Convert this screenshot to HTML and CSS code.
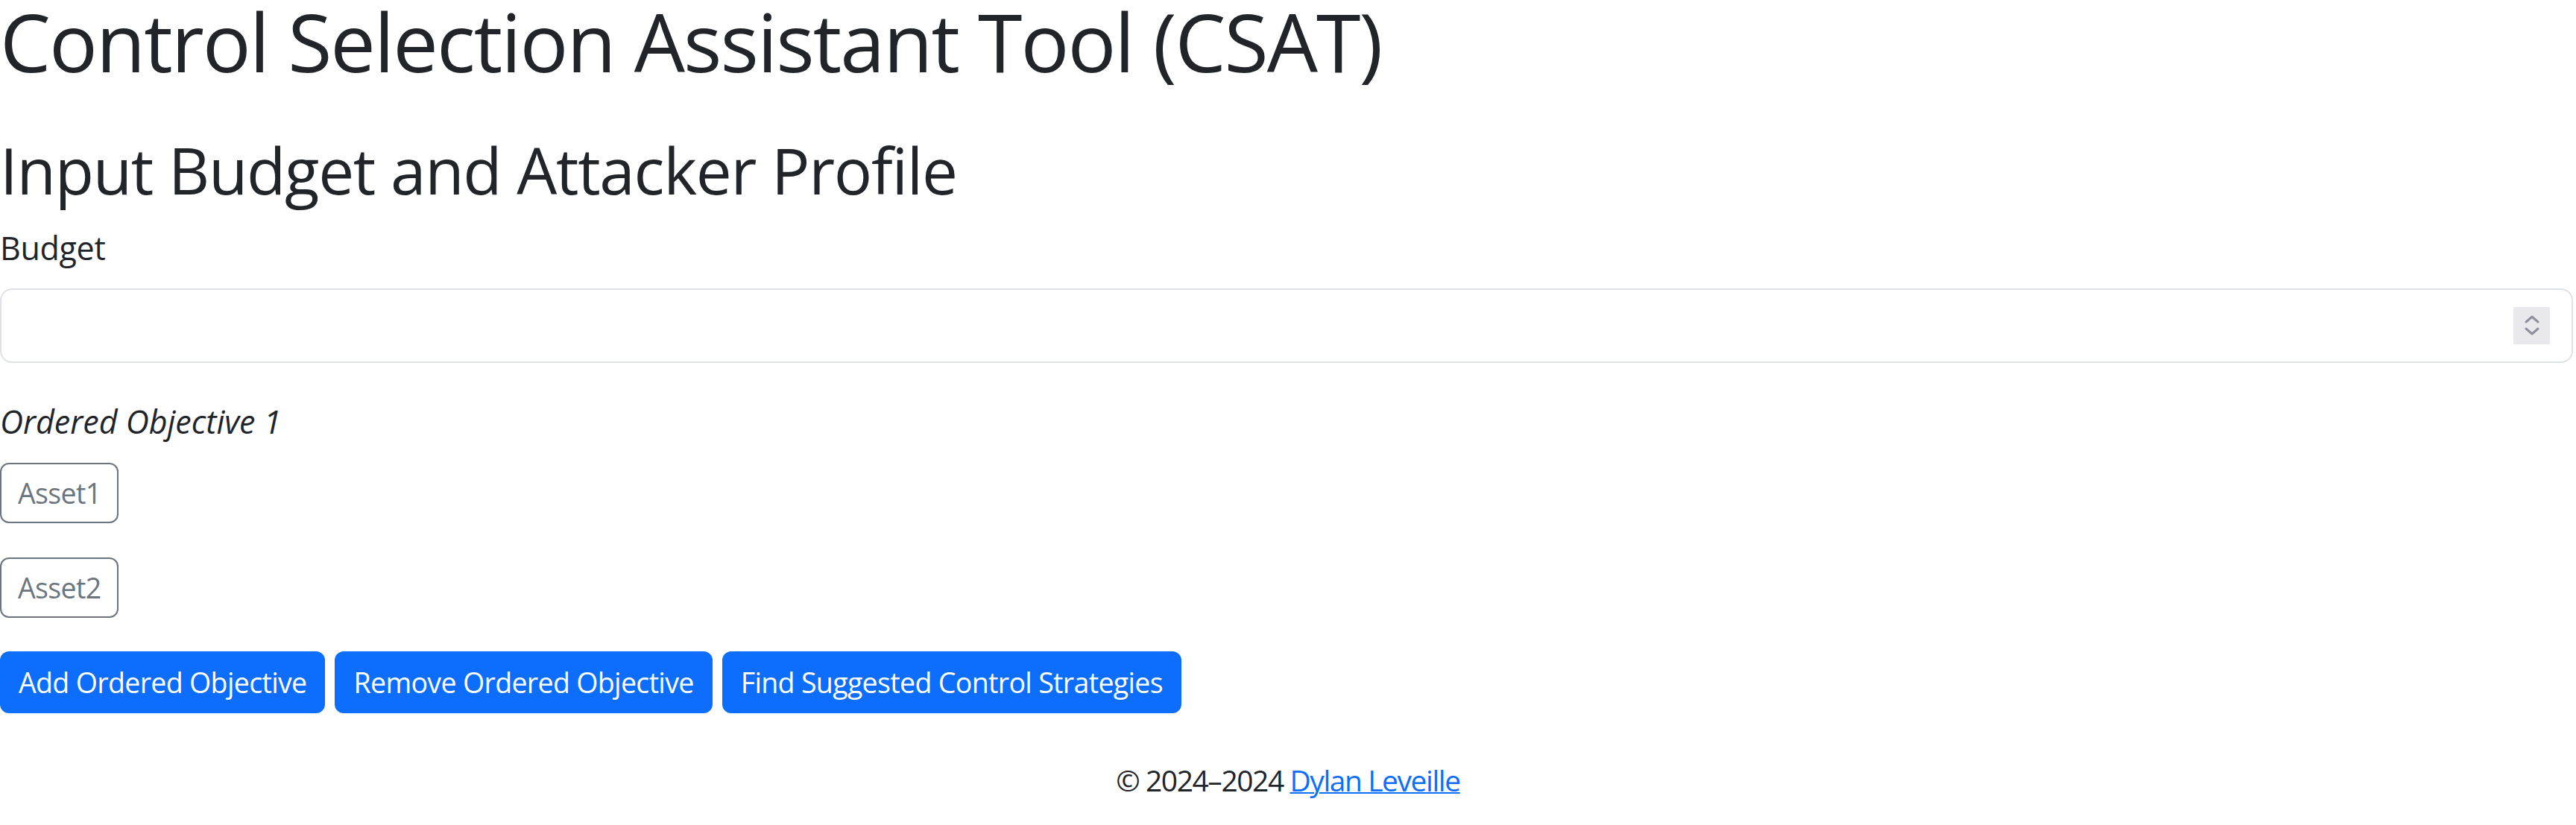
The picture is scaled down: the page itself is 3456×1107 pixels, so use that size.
FILE: index.html
```html
<!DOCTYPE html>
<html lang="en">
<head>
<meta charset="utf-8">
<title>Control Selection Assistant Tool (CSAT)</title>
<link rel="stylesheet" href="styles.css">
</head>
<body>
<main class="page">
  <h1 class="title">Control Selection Assistant Tool (CSAT)</h1>
  <h2 class="subtitle">Input Budget and Attacker Profile</h2>
  <form class="profile-form">
    <label class="field-label" for="budget">Budget</label>
    <div class="budget-input" id="budget">
      <span class="spinner">
        <svg class="chevrons" width="22" height="30" viewBox="0 0 22 30" aria-hidden="true">
          <path d="M3 10 L11 3 L19 10" fill="none" stroke="#8f8f9d" stroke-width="3" stroke-linecap="round" stroke-linejoin="round"/>
          <path d="M3 19 L11 26 L19 19" fill="none" stroke="#8f8f9d" stroke-width="3" stroke-linecap="round" stroke-linejoin="round"/>
        </svg>
      </span>
    </div>
    <p class="objective-title">Ordered Objective 1</p>
    <div class="asset-list">
      <button type="button" class="btn btn-outline">Asset1</button>
      <button type="button" class="btn btn-outline">Asset2</button>
    </div>
    <div class="actions">
      <button type="button" class="btn btn-primary">Add Ordered Objective</button>
      <button type="button" class="btn btn-primary">Remove Ordered Objective</button>
      <button type="button" class="btn btn-primary">Find Suggested Control Strategies</button>
    </div>
  </form>
</main>
<footer class="footer">© 2024–2024 <a class="footer-link" href="#">Dylan Leveille</a></footer>
</body>
</html>
```

FILE: styles.css
```css
* {
  box-sizing: border-box;
}

html, body {
  margin: 0;
  padding: 0;
  background: #ffffff;
}

body {
  font-family: "Open Sans", "Noto Sans", "Liberation Sans", sans-serif;
  color: #212529;
  letter-spacing: -0.3px;
}

.page {
  display: flex;
  flex-direction: column;
}

.title {
  margin: 0;
  font-size: 108px;
  font-weight: 400;
  line-height: 112px;
  letter-spacing: -2px;
}

.subtitle {
  margin: 66px 0 0;
  font-size: 85.5px;
  font-weight: 400;
  line-height: 100px;
  letter-spacing: -1.3px;
}

.profile-form {
  display: flex;
  flex-direction: column;
  align-items: flex-start;
}

.field-label {
  margin-top: 25px;
  font-size: 43px;
  line-height: 60px;
}

.budget-input {
  margin-top: 24px;
  width: calc(100% - 4px);
  height: 100px;
  border: 2px solid #dee2e6;
  border-radius: 16px;
  display: flex;
  justify-content: flex-end;
  align-items: center;
  padding-right: 29px;
}

.spinner {
  width: 49px;
  height: 50px;
  background: #e9e9ed;
  display: flex;
  align-items: center;
  justify-content: center;
}

.objective-title {
  margin: 49px 0 0;
  font-size: 43px;
  font-style: italic;
  line-height: 60px;
  letter-spacing: 0;
}

.asset-list {
  margin-top: 25px;
  display: flex;
  flex-direction: column;
  align-items: flex-start;
  gap: 46px;
}

.btn {
  font-family: inherit;
  font-size: 37.5px;
  letter-spacing: -0.65px;
  line-height: 58px;
  border-radius: 12px;
  border: 2px solid transparent;
  cursor: pointer;
  margin: 0;
}

.btn-outline {
  height: 81px;
  padding: 9.5px 22px;
  background: #ffffff;
  border-color: #6c757d;
  color: #6c757d;
}

.btn-primary {
  height: 83px;
  padding: 10.5px 23px;
  background: #0d6efd;
  border-color: #0d6efd;
  color: #ffffff;
}

.actions {
  margin-top: 45px;
  display: flex;
  gap: 13px;
}

.footer {
  margin-top: 60px;
  text-align: center;
  font-size: 39px;
  letter-spacing: -1.45px;
  line-height: 60px;
  color: #212529;
}

.footer-link {
  color: #0d6efd;
  text-decoration: underline;
  text-decoration-thickness: 2px;
}
```
